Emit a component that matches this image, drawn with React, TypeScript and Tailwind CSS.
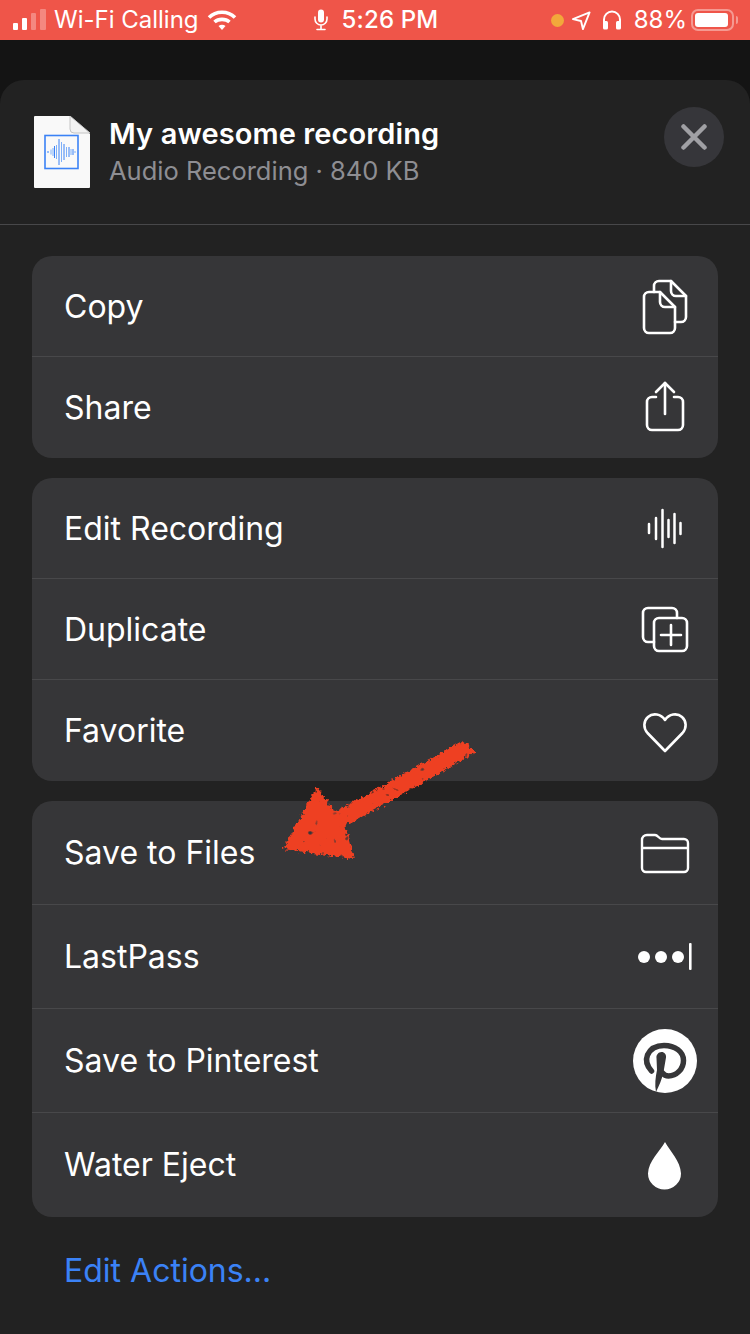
const font = { fontFamily: 'Inter, "Noto Sans", sans-serif' }

const CopyIcon = () => (
  <svg viewBox="0 0 64 64" className="w-16 h-16" fill="none" stroke="white" strokeWidth="2.6" strokeLinejoin="round" strokeLinecap="round">
    <path d="M21 18 V12 a5 5 0 0 1 5-5 H38 L53 22 V43 a5 5 0 0 1-5 5 H42" />
    <path d="M38 7 V17 a5 5 0 0 0 5 5 H53" />
    <path d="M11 23 a5 5 0 0 1 5-5 H27 L42 33 V54 a5 5 0 0 1-5 5 H16 a5 5 0 0 1-5-5 Z" />
    <path d="M27 18 V28 a5 5 0 0 0 5 5 H42" />
  </svg>
)

const ShareIcon = () => (
  <svg viewBox="0 0 64 64" className="w-16 h-16" fill="none" stroke="white" strokeWidth="2.6" strokeLinejoin="round" strokeLinecap="round">
    <path d="M23 21 H19 a5 5 0 0 0-5 5 V49 a5 5 0 0 0 5 5 H45 a5 5 0 0 0 5-5 V26 a5 5 0 0 0-5-5 H41" />
    <path d="M32 7 V38" />
    <path d="M23 16 L32 7 L41 16" />
  </svg>
)

const WaveIcon = () => (
  <svg viewBox="0 0 64 64" className="w-16 h-16" fill="none" stroke="white" strokeWidth="2.5" strokeLinecap="round">
    <path d="M16 28 V37 M23 22 V43 M29.5 14 V51 M35.5 24 V41 M41.5 18 V47 M47.5 27 V38" />
  </svg>
)

const DuplicateIcon = () => (
  <svg viewBox="0 0 64 64" className="w-16 h-16" fill="none" stroke="white" strokeWidth="2.6" strokeLinejoin="round" strokeLinecap="round">
    <path d="M21 45 H15 a5 5 0 0 1-5-5 V16 a5 5 0 0 1 5-5 H39 a5 5 0 0 1 5 5 V21" />
    <rect x="21" y="21" width="33" height="33" rx="5" />
    <path d="M38 28 V48 M28 38 H48" />
  </svg>
)

const HeartIcon = () => (
  <svg viewBox="0 0 64 64" className="w-16 h-16" fill="none" stroke="white" strokeWidth="2.6" strokeLinejoin="round">
    <path d="M32 52 L14.5 34 C10 29 10.5 22 15 18 C20 13.5 28 15 32 21 C36 15 44 13.5 49 18 C53.5 22 54 29 49.5 34 Z" />
  </svg>
)

const FolderIcon = () => (
  <svg viewBox="0 0 64 64" className="w-16 h-16" fill="none" stroke="white" strokeWidth="2.4" strokeLinejoin="round">
    <path d="M9 19 a5 5 0 0 1 5-5 h8 c3 0 4 4 7 4 h22 a4 4 0 0 1 4 4 v25 a4 4 0 0 1-4 4 H13 a4 4 0 0 1-4-4 Z" />
    <path d="M9 27 H55" />
  </svg>
)

const LastPassIcon = () => (
  <svg viewBox="0 0 64 64" className="w-16 h-16" fill="white">
    <circle cx="11" cy="32" r="6" />
    <circle cx="28" cy="32" r="6" />
    <circle cx="45" cy="32" r="6" />
    <rect x="56" y="18" width="2.6" height="27" rx="1" />
  </svg>
)

const DropIcon = () => (
  <svg viewBox="0 0 64 64" className="w-16 h-16" fill="white">
    <path d="M32 9 C27 18 15.5 28 15 40.5 A16.5 16 0 0 0 48 40.5 C47.5 28 37 18 32 9 Z" />
  </svg>
)

const PinIcon = () => (
  <svg viewBox="0 0 64 64" className="w-16 h-16">
    <circle cx="32" cy="32" r="32" fill="white" />
    <path
      d="M18.5 42 C14 37 12.5 31 14.5 26 C17.5 19.5 24 16.5 31 16.5 C42 16.5 50.5 22.5 50.5 31.5 C50.5 40 43.5 47 35.5 47 C33 47 31 46 29.5 44"
      fill="none"
      stroke="#363638"
      strokeWidth="5.5"
      strokeLinecap="round"
    />
    <path
      d="M28.5 23 C31.5 23 33.5 25.5 33 28.5 L30.5 43 C29 50 26 57 23 63 C21.5 56 22.5 48 24 41 L23.5 29 C23 26 25.5 23 28.5 23 Z"
      fill="#363638"
    />
  </svg>
)

const Row = ({ label, icon, height, last, nudge }: { label: string; icon: React.ReactNode; height: string; last?: boolean; nudge?: boolean }) => (
  <div className={`flex items-center justify-between pl-[32px] pr-[21px] ${height} ${last ? "" : "border-b border-[#48484a]"}`}>
    <span className={`text-[32px] text-white ${nudge ? "mt-[2px]" : ""}`}>{label}</span>
    {icon}
  </div>
)

const StatusBar = () => (
  <div className="h-10 bg-[#ef5549] flex items-center pl-[13px] pr-[12px] text-white">
    <div className="flex items-end gap-1 h-[21px] mt-[-1px]">
      <div className="w-[5px] h-[7px] rounded-[1px] bg-white" />
      <div className="w-[5px] h-[12px] rounded-[1px] bg-white" />
      <div className="w-[5px] h-[17px] rounded-[1px] bg-white/30" />
      <div className="w-[6px] h-[21px] rounded-[1px] bg-white/30" />
    </div>
    <span className="ml-2 text-[24px] leading-none">Wi-Fi Calling</span>
    <svg viewBox="0 0 30 22" className="w-[30px] h-[22px] ml-[8px]" fill="none" stroke="white" strokeWidth="3.6">
      <path d="M2 8.5 C9 1.5 21 1.5 28 8.5" />
      <path d="M7.5 13 C11.5 9.5 18.5 9.5 22.5 13" />
      <path d="M11.5 17 C13.5 15.4 16.5 15.4 18.5 17 L15 21 Z" fill="white" stroke="none" />
    </svg>
    <svg viewBox="0 0 14 22" className="w-[14px] h-[22px] ml-[77px]" fill="none" stroke="white" strokeWidth="1.6" strokeLinecap="round">
      <rect x="4" y="0.5" width="6" height="13" rx="3" fill="white" stroke="none" />
      <path d="M1 8 V10 a6 6 0 0 0 12 0 V8 M7 16 V20.5 M3 20.5 H11" />
    </svg>
    <span className="ml-[14px] text-[24px] font-medium leading-none tracking-[0.15px]">5:26 PM</span>
    <div className="ml-auto flex items-center">
      <div className="w-[13px] h-[13px] rounded-full bg-[#f2a83b]" />
      <svg viewBox="0 0 20 20" className="w-[19px] h-[19px] ml-[8px]" fill="none" stroke="white" strokeWidth="2" strokeLinejoin="round">
        <path d="M1 8.5 L18.5 1.5 L11.5 19 L9.5 10.5 Z" />
      </svg>
      <svg viewBox="0 0 20 20" className="w-[20px] h-[20px] ml-[11px]" fill="none" stroke="white" strokeWidth="2">
        <path d="M2 14 V9.5 a8 8 0 0 1 16 0 V14" />
        <rect x="1" y="11" width="5" height="8.5" rx="1.5" fill="white" stroke="none" />
        <rect x="14" y="11" width="5" height="8.5" rx="1.5" fill="white" stroke="none" />
      </svg>
      <span className="ml-[12px] text-[24px] leading-none">88%</span>
      <div className="ml-[4px] w-[43px] h-[22px] rounded-[7px] border-2 border-white/40 p-[2px]">
        <div className="w-[33px] h-full rounded-[3px] bg-white" />
      </div>
      <div className="ml-[2px] w-[2px] h-[8px] rounded-r-sm bg-white/40" />
    </div>
  </div>
)

const FileThumb = () => (
  <svg viewBox="0 0 56 72" className="w-14 h-[72px] shrink-0">
    <path d="M1 0 H36 L56 18 V71 a1 1 0 0 1-1 1 H1 a1 1 0 0 1-1-1 V1 a1 1 0 0 1 1-1 Z" fill="#f9f9f9" />
    <path d="M36 0 V13 a4 4 0 0 0 4 4 H56 Z" fill="#f2f2f2" stroke="#c4c4c4" strokeWidth="1" />
    <rect x="11" y="19.5" width="33" height="33" fill="none" stroke="#3b82f6" strokeWidth="1.6" />
    <path d="M14 35 V37 M25 23 V49 M30 28 V44 M20.5 30 V42 M35 31 V41 M39 33 V39" stroke="#3b82f6" strokeWidth="1" />
    <path d="M17 33.5 V38.5 M19 32 V40 M22.5 29 V43 M27.5 26 V46 M32.5 31 V41 M37 33 V39 M41 35 V37" stroke="#7fb0f8" strokeWidth="1" />
  </svg>
)

const Arrow = () => (
  <svg className="absolute left-[270px] top-[730px] w-[220px] h-[140px]" viewBox="0 0 220 140">
    <defs>
      <filter id="rough" x="-10%" y="-10%" width="120%" height="120%">
        <feTurbulence type="fractalNoise" baseFrequency="0.3" numOctaves="2" seed="4" result="noise" />
        <feDisplacementMap in="SourceGraphic" in2="noise" scale="7" xChannelSelector="R" yChannelSelector="G" result="moved" />
        <feTurbulence type="fractalNoise" baseFrequency="0.16" numOctaves="1" seed="9" result="blots" />
        <feColorMatrix
          in="blots"
          type="matrix"
          values="0 0 0 0 0  0 0 0 0 0  0 0 0 0 0  9 0 0 0 -6.1"
          result="holes"
        />
        <feComposite in="moved" in2="holes" operator="out" result="cut" />
        <feGaussianBlur in="cut" stdDeviation="0.5" />
      </filter>
    </defs>
    <g filter="url(#rough)">
      <path d="M47 57 L65 82 L119 52 L192 11 L206 22 L128 67 L75 96 L84 129 L13 119 Z" fill="#ee4023" />
    </g>
  </svg>
)

export default function App() {
  return (
    <div className="relative w-[750px] h-[1334px] overflow-hidden bg-[#141414]" style={font}>
      <StatusBar />
      <div className="mt-10 h-[1254px] rounded-t-[24px] bg-[#222222]">
        {/* header */}
        <div className="h-[145px] flex items-center pl-[34px] pr-[26px] border-b border-[#48484a]">
          <FileThumb />
          <div className="ml-[19px] flex-1">
            <div className="text-[29px] font-semibold text-white leading-[34px] tracking-[0.1px]">My awesome recording</div>
            <div className="text-[25.5px] text-[#8e8e93] leading-[34px] mt-[3px]">Audio Recording · 840 KB</div>
          </div>
          <div className="w-[60px] h-[60px] rounded-full bg-[#36363a] flex items-center justify-center mt-[-31px]">
            <svg viewBox="0 0 26 26" className="w-[26px] h-[26px]" stroke="#a0a0a4" strokeWidth="4.5" strokeLinecap="round">
              <path d="M2.5 2.5 L23.5 23.5 M23.5 2.5 L2.5 23.5" />
            </svg>
          </div>
        </div>

        <div className="px-8 pt-[31px] flex flex-col gap-5">
          <div className="rounded-[20px] bg-[#363638]">
            <Row label="Copy" icon={<CopyIcon />} height="h-[101px]" nudge />
            <Row label="Share" icon={<ShareIcon />} height="h-[101px]" last />
          </div>
          <div className="rounded-[20px] bg-[#363638]">
            <Row label="Edit Recording" icon={<WaveIcon />} height="h-[101px]" nudge />
            <Row label="Duplicate" icon={<DuplicateIcon />} height="h-[101px]" nudge />
            <Row label="Favorite" icon={<HeartIcon />} height="h-[101px]" last />
          </div>
          <div className="rounded-[20px] bg-[#363638]">
            <Row label="Save to Files" icon={<FolderIcon />} height="h-[104px]" />
            <Row label="LastPass" icon={<LastPassIcon />} height="h-[104px]" />
            <Row label="Save to Pinterest" icon={<PinIcon />} height="h-[104px]" />
            <Row label="Water Eject" icon={<DropIcon />} height="h-[104px]" last />
          </div>
        </div>

        <div className="pl-[64px] pt-[34px] text-[32px] leading-[40px] text-[#3b82f6]">Edit Actions...</div>
      </div>
      <Arrow />
    </div>
  )
}
